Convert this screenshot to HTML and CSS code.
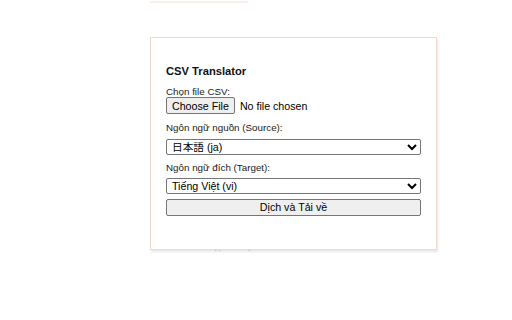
FILE: index.html
```html
<!DOCTYPE html>
<html lang="vi">
<head>
<meta charset="utf-8">
<title>CSV Translator</title>
<link rel="stylesheet" href="styles.css">
</head>
<body>
<div class="page">
  <div class="page-rule"></div>
  <a class="page-link" href="#">Nhập dữ liệu mới</a>
  <div class="popup">
    <h3 class="title">CSV Translator</h3>
    <label class="label first" for="file">Chọn file CSV:</label>
    <input class="file" id="file" type="file" accept=".csv">
    <label class="label second" for="src">Ngôn ngữ nguồn (Source):</label>
    <select class="select" id="src">
      <option>日本語 (ja)</option>
    </select>
    <label class="label third" for="dst">Ngôn ngữ đích (Target):</label>
    <select class="select" id="dst">
      <option>Tiếng Việt (vi)</option>
    </select>
    <button class="action" type="button">Dịch và Tải về</button>
  </div>
</div>
</body>
</html>
```
FILE: styles.css
```css
html, body {
  margin: 0;
  padding: 0;
  background: #ffffff;
}

.page {
  position: relative;
  width: 512px;
  height: 320px;
  overflow: hidden;
  font-family: "Liberation Sans", Arial, sans-serif;
}

.page-rule {
  position: absolute;
  left: 150px;
  top: 1px;
  width: 98px;
  height: 2px;
  background: #fdeee8;
}

.page-link {
  position: absolute;
  left: 200px;
  top: 240px;
  font-size: 10px;
  line-height: 12px;
  color: #a9b8e4;
  text-decoration: none;
}

.popup {
  position: absolute;
  left: 150px;
  top: 37px;
  z-index: 1;
  box-sizing: border-box;
  width: 287px;
  height: 213px;
  padding: 27px 15px 0 15px;
  background: #ffffff;
  border: 1px solid #f1d8cf;
  box-shadow: 1px 2px 2px rgba(120, 130, 150, 0.18);
  display: flex;
  flex-direction: column;
  align-items: stretch;
  color: #000000;
}

.title {
  margin: 0;
  font-size: 11.2px;
  line-height: 13px;
  font-weight: bold;
  color: #111111;
}

.label {
  display: block;
  font-size: 9.8px;
  line-height: 11px;
  color: #1a1a1a;
}

.label.first { margin-top: 8px; }
.label.second { margin-top: 8px; margin-bottom: 6px; }
.label.third { margin-top: 7px; margin-bottom: 5px; }

.file {
  font-family: "Liberation Sans", Arial, sans-serif;
  font-size: 10.67px;
  height: 17px;
  padding: 0;
  margin: 0;
  color: #000000;
}

.file::file-selector-button {
  font-family: "Liberation Sans", Arial, sans-serif;
  font-size: 10.67px;
  height: 17px;
  margin: 0 5px 0 0;
  padding: 0 5px;
  background: #efefef;
  border: 1px solid #767676;
  border-radius: 2px;
  color: #000000;
}

.select {
  box-sizing: border-box;
  width: 100%;
  height: 16px;
  margin: 0;
  padding: 0 0 0 1px;
  font-family: "Liberation Sans", "Noto Sans CJK JP", Arial, sans-serif;
  font-size: 10.67px;
  line-height: 14px;
  color: #000000;
  background: #ffffff;
  border: 1px solid #767676;
  border-radius: 2px;
}

.action {
  box-sizing: border-box;
  width: 100%;
  height: 17px;
  margin: 5px 0 0 0;
  padding: 0;
  font-family: "Liberation Sans", Arial, sans-serif;
  font-size: 10.67px;
  line-height: 15px;
  color: #000000;
  background: #efefef;
  border: 1px solid #767676;
  border-radius: 2px;
}
```
